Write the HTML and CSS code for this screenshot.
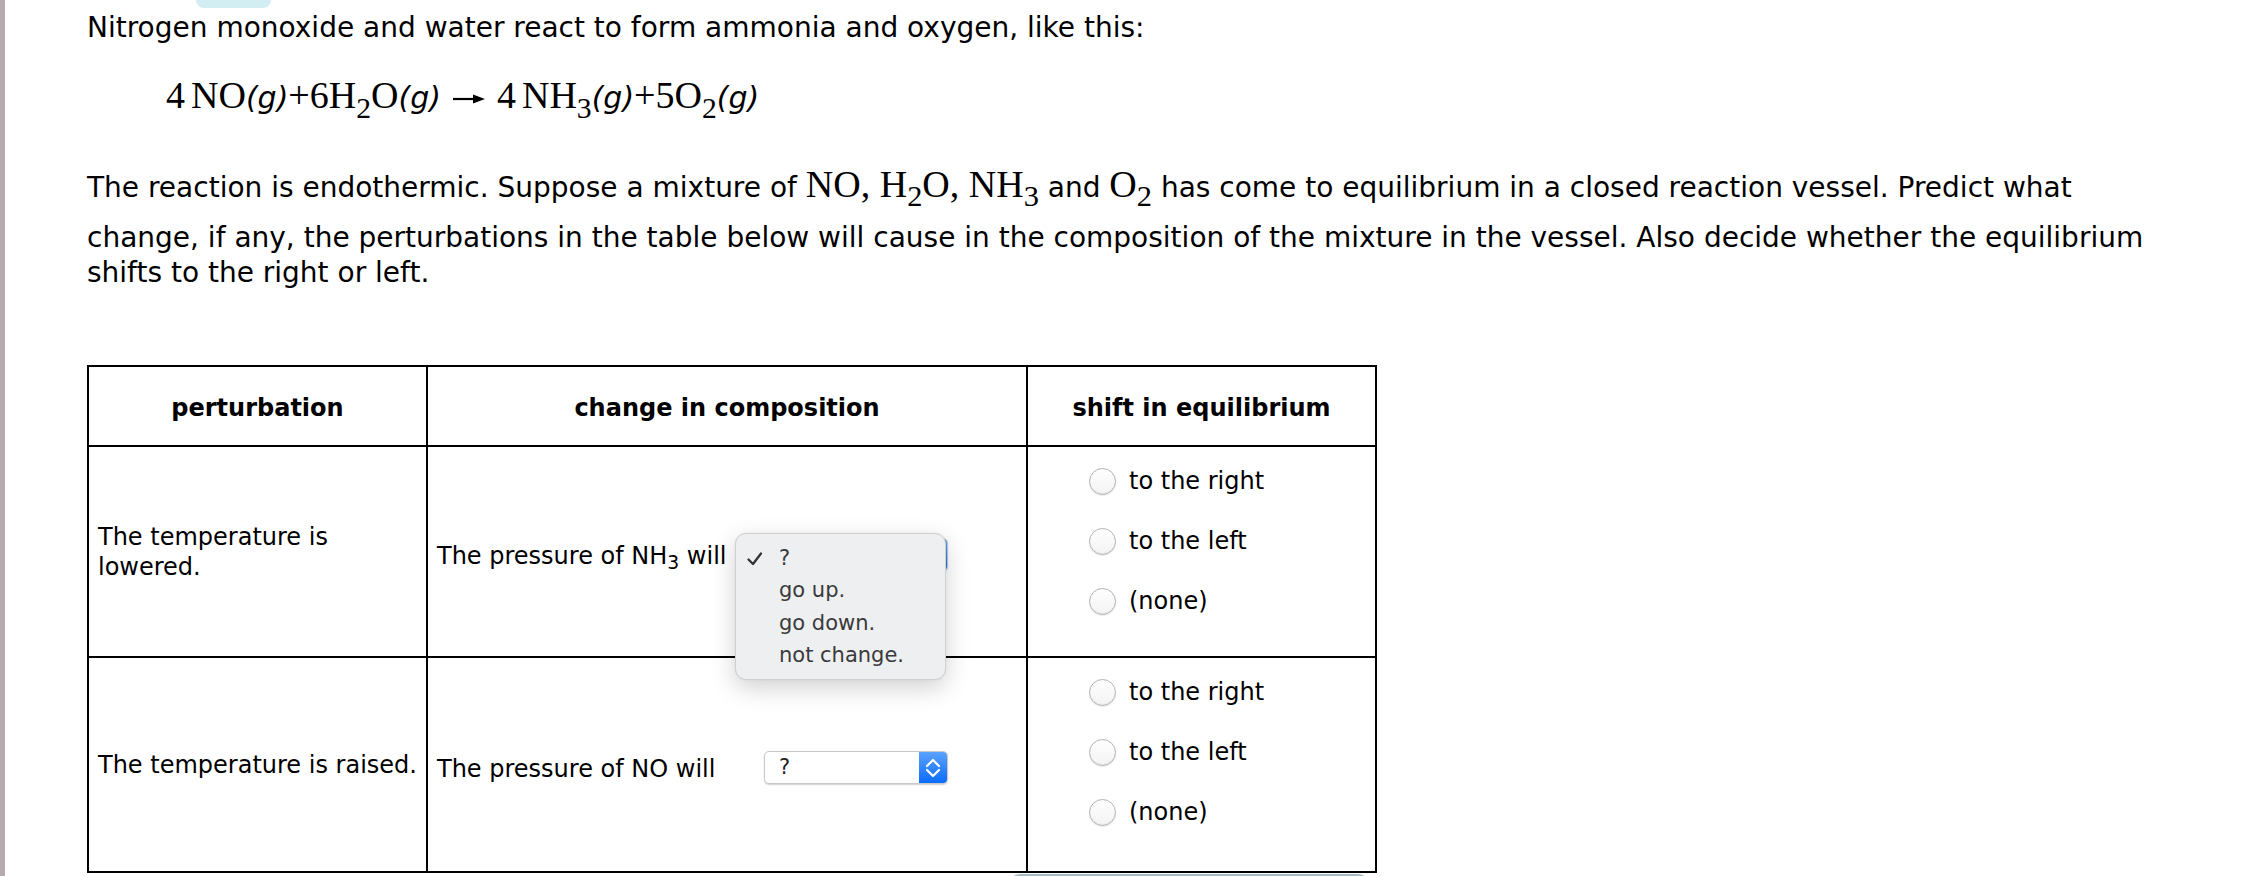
FILE: index.html
```html
<!DOCTYPE html>
<html lang="en">
<head>
<meta charset="utf-8">
<title>Equilibrium shifts</title>
<link rel="stylesheet" href="styles.css">
</head>
<body>
<div class="page">
  <div class="tab"></div>
  <p class="intro">Nitrogen monoxide and water react to form ammonia and oxygen, like this:</p>
  <div class="equation">4<span class="thin"></span>NO<i>(g)</i>+6H<sub>2</sub>O<i>(g)</i><svg class="arrow" width="32" height="12" viewBox="0 0 32 12"><line x1="0" y1="6" x2="22" y2="6" stroke="#000" stroke-width="2.2"/><polygon points="20,1.5 32,6 20,10.5" fill="#000"/></svg>4<span class="thin"></span>NH<sub>3</sub><i>(g)</i>+5O<sub>2</sub><i>(g)</i></div>
  <p class="question">The reaction is endothermic. Suppose a mixture of <span class="chem">NO, H<sub>2</sub>O, NH<sub>3</sub></span> and <span class="chem">O<sub>2</sub></span> has come to equilibrium in a closed reaction vessel. Predict what change, if any, the perturbations in the table below will cause in the composition of the mixture in the vessel. Also decide whether the equilibrium shifts to the right or left.</p>

  <table class="grid">
    <colgroup><col class="c1"><col class="c2"><col class="c3"></colgroup>
    <thead>
      <tr class="head"><th>perturbation</th><th>change in composition</th><th>shift in equilibrium</th></tr>
    </thead>
    <tbody>
      <tr class="row1">
        <td class="pert">The temperature is lowered.</td>
        <td class="change">
          <div class="line">
            <span class="label">The pressure of NH<sub>3</sub> will</span>
            <span class="selwrap">
              <span class="select"><span class="val">?</span><span class="btn"><svg width="28" height="31" viewBox="0 0 28 31"><path d="M8 14 L14 8 L20 14" fill="none" stroke="#fff" stroke-width="2.2" stroke-linecap="round" stroke-linejoin="round"/><path d="M8 18 L14 24 L20 18" fill="none" stroke="#fff" stroke-width="2.2" stroke-linecap="round" stroke-linejoin="round"/></svg></span></span>
              <span class="popup">
                <span class="item"><svg class="check" width="18" height="16" viewBox="0 0 18 16"><path d="M2.5 8.5 L7 13 L15 2.5" fill="none" stroke="#333" stroke-width="2.3" stroke-linecap="round" stroke-linejoin="round"/></svg>?</span>
                <span class="item">go up.</span>
                <span class="item">go down.</span>
                <span class="item">not change.</span>
              </span>
            </span>
          </div>
        </td>
        <td class="shift">
          <div class="radios">
            <label class="opt"><span class="radio"></span>to the right</label>
            <label class="opt"><span class="radio"></span>to the left</label>
            <label class="opt"><span class="radio"></span>(none)</label>
          </div>
        </td>
      </tr>
      <tr class="row2">
        <td class="pert nowrap">The temperature is raised.</td>
        <td class="change">
          <div class="line">
            <span class="label">The pressure of NO will</span>
            <span class="selwrap">
              <span class="select"><span class="val">?</span><span class="btn"><svg width="28" height="31" viewBox="0 0 28 31"><path d="M8 14 L14 8 L20 14" fill="none" stroke="#fff" stroke-width="2.2" stroke-linecap="round" stroke-linejoin="round"/><path d="M8 18 L14 24 L20 18" fill="none" stroke="#fff" stroke-width="2.2" stroke-linecap="round" stroke-linejoin="round"/></svg></span></span>
            </span>
          </div>
        </td>
        <td class="shift">
          <div class="radios">
            <label class="opt"><span class="radio"></span>to the right</label>
            <label class="opt"><span class="radio"></span>to the left</label>
            <label class="opt"><span class="radio"></span>(none)</label>
          </div>
        </td>
      </tr>
    </tbody>
  </table>
  <div class="next"></div>
</div>
</body>
</html>
```
FILE: styles.css
```css
html, body {
  margin: 0;
  padding: 0;
  background: #fff;
}
body {
  font-family: "DejaVu Sans", Verdana, sans-serif;
  color: #000;
  overflow: hidden;
}
.page {
  border-left: 5px solid #b3abb0;
  min-height: 876px;
  box-sizing: border-box;
  padding-left: 82px;
}
.tab {
  width: 75px;
  height: 8px;
  margin-left: 109px;
  background: #d2eef3;
  border-radius: 0 0 9px 9px;
}
.intro {
  font-size: 28px;
  line-height: 35px;
  margin: 2px 0 0;
}
.equation {
  font-family: "Liberation Serif", "Times New Roman", serif;
  font-size: 38px;
  line-height: 50px;
  height: 50px;
  margin: 25px 0 0 79px;
  white-space: nowrap;
}
.equation i {
  font-family: "DejaVu Sans", Verdana, sans-serif;
  font-style: oblique;
  font-size: 30px;
}
.equation sub {
  font-size: 0.78em;
  vertical-align: -0.33em;
  line-height: 0;
}
.thin {
  display: inline-block;
  width: 6px;
}
.arrow {
  margin: 0 12px 0 12px;
  vertical-align: 3px;
}
.question {
  font-size: 28px;
  line-height: 35px;
  margin: 47px 0 0;
  width: 2085px;
}
.chem {
  display: inline-block;
  font-family: "Liberation Serif", "Times New Roman", serif;
  font-size: 38px;
  line-height: 35px;
  padding-bottom: 18px;
}
.chem sub {
  font-size: 0.8em;
  vertical-align: -0.3em;
  line-height: 0;
}
.grid {
  margin-top: 75px;
  border-collapse: collapse;
  table-layout: fixed;
  width: 1288px;
  font-size: 24px;
}
.c1 { width: 339px; }
.c2 { width: 600px; }
.c3 { width: 349px; }
.grid th, .grid td {
  border: 2px solid #000;
  padding: 0 9px;
}
.grid th {
  height: 75px;
  font-weight: bold;
  text-align: center;
  padding-top: 3px;
}
.grid td {
  vertical-align: middle;
  line-height: 30px;
}
.pert {
  text-align: left;
}
.nowrap {
  white-space: nowrap;
}
.change {
  padding-top: 5px !important;
}
.line {
  display: flex;
  align-items: center;
}
.label {
  width: 327px;
  flex: none;
  padding-top: 4px;
}
.label sub {
  font-size: 0.78em;
  vertical-align: -0.25em;
  line-height: 0;
}
.selwrap {
  position: relative;
  display: inline-block;
}
.select {
  display: flex;
  width: 184px;
  height: 33px;
  box-sizing: border-box;
  border: 1px solid #c9c9c9;
  border-radius: 5px;
  background: #fff;
  box-shadow: 0 1px 1.5px rgba(0, 0, 0, 0.18);
  overflow: hidden;
}
.val {
  flex: 1;
  padding-left: 14px;
  font-size: 21px;
  line-height: 31px;
  color: #222;
}
.btn {
  width: 28px;
  height: 31px;
  background: linear-gradient(#5aa2ff, #0b6cfd);
}
.btn svg {
  display: block;
}
.popup {
  position: absolute;
  left: -29px;
  top: -5px;
  width: 211px;
  box-sizing: border-box;
  padding: 8px 0 7px;
  background: #eeeff1;
  border: 1px solid #cfd0d2;
  border-radius: 11px;
  box-shadow: 0 8px 24px rgba(0, 0, 0, 0.18), 0 0 2px rgba(0, 0, 0, 0.08);
  display: flex;
  flex-direction: column;
  z-index: 2;
}
.item {
  position: relative;
  display: block;
  height: 32.5px;
  line-height: 32.5px;
  padding-left: 43px;
  font-size: 21px;
  color: #3a3a3a;
  white-space: nowrap;
}
.check {
  position: absolute;
  left: 10px;
  top: 9px;
}
.shift {
  vertical-align: top !important;
  padding: 0 !important;
}
.radios {
  display: flex;
  flex-direction: column;
  padding: 4px 0 29px 61px;
}
.row1 .radios {
  padding-bottom: 25px;
}
.opt {
  display: flex;
  align-items: center;
  gap: 13px;
  height: 60px;
}
.radio {
  width: 27px;
  height: 27px;
  box-sizing: border-box;
  border-radius: 50%;
  border: 1px solid #b3b3b3;
  background: linear-gradient(#ffffff, #f3f3f3);
  box-shadow: inset 0 -1px 1px rgba(0, 0, 0, 0.06), 0 1px 1px rgba(0, 0, 0, 0.08);
  flex: none;
}
.next {
  margin: 1px 0 0 918px;
  width: 364px;
  height: 40px;
  border: 2px solid #a7bac4;
  border-radius: 16px;
}
```
